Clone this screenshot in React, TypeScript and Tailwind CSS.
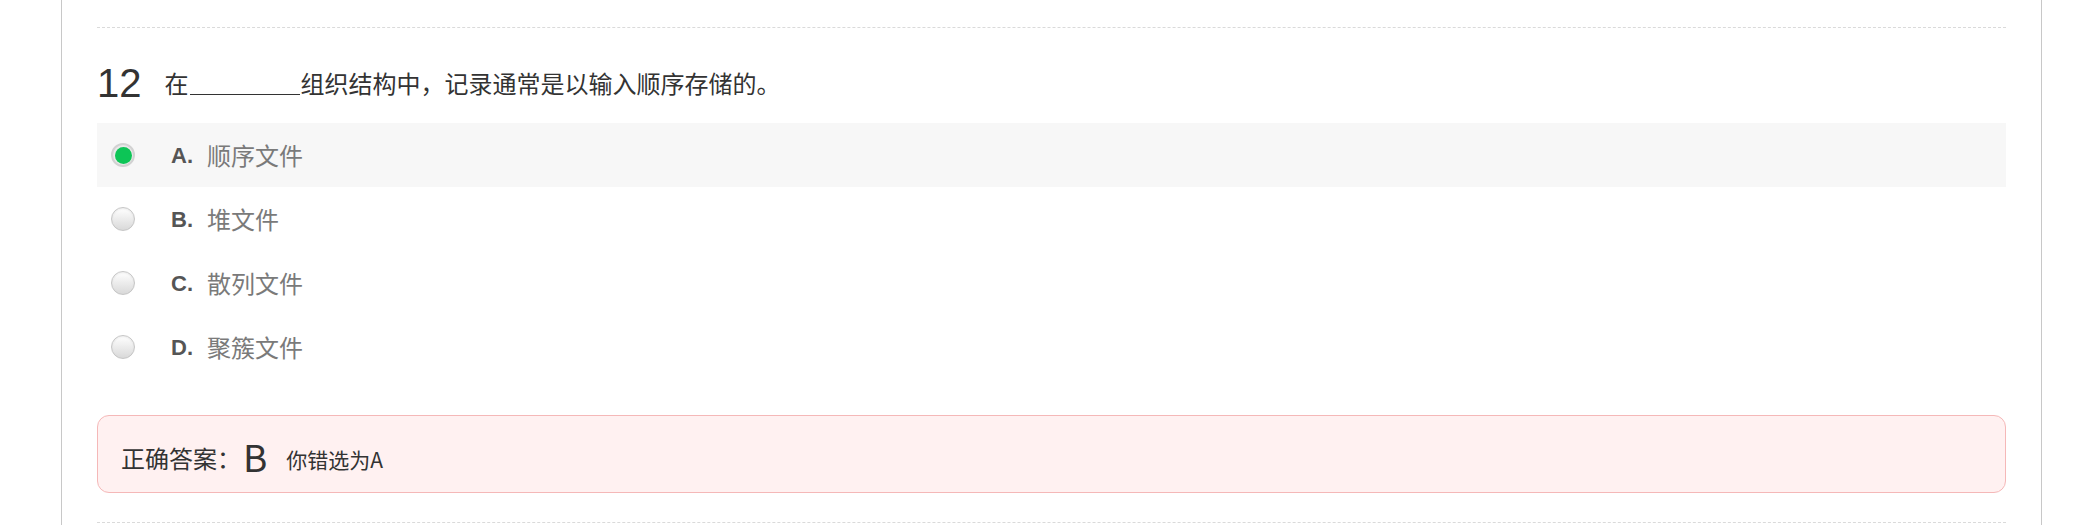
import React from "react";

const options = [
  { key: "A", text: "顺序文件", checked: true },
  { key: "B", text: "堆文件", checked: false },
  { key: "C", text: "散列文件", checked: false },
  { key: "D", text: "聚簇文件", checked: false },
];

const cjk = { fontFamily: '"Noto Sans CJK SC", "Noto Sans", sans-serif' };
const latin = { fontFamily: '"Liberation Sans", Arial, sans-serif' };

function Radio({ checked }: { checked: boolean }) {
  if (checked) {
    return (
      <span className="flex h-[24px] w-[24px] items-center justify-center rounded-full border-2 border-[#d2d2d2] bg-[#e9e9e9]">
        <span className="h-[17px] w-[17px] rounded-full bg-[#0dc556]" />
      </span>
    );
  }
  return (
    <span className="h-[24px] w-[24px] rounded-full border border-[#c6c6c6] bg-gradient-to-b from-[#ffffff] to-[#d9d9d9] shadow-[inset_0_1px_2px_rgba(0,0,0,0.08)]" />
  );
}

export default function App() {
  return (
    <div className="min-h-[525px] w-full bg-white">
      <div className="ml-[61px] min-h-[525px] w-[1981px] border-l border-r border-[#c8c8c8] px-[35px] pt-[27px]">
        {/* question */}
        <div className="border-t border-dashed border-[#dadada]">
          <div className="mt-[35px] mb-[20px] flex h-[40px] items-center">
            <span className="text-[40px] leading-none text-[#333]" style={latin}>
              12
            </span>
            <span className="ml-[23px] flex items-end text-[24px] leading-none text-[#333]" style={cjk}>
              在
              <span className="mx-px inline-block h-[22px] w-[110px] border-b-[1.5px] border-[#333]" />
              组织结构中，记录通常是以输入顺序存储的。
            </span>
          </div>

          {/* options */}
          <div className="flex flex-col">
            {options.map((o) => (
              <div
                key={o.key}
                className={`flex h-[64px] items-center pl-[14px] ${o.checked ? "bg-[#f7f7f7]" : ""}`}
              >
                <Radio checked={o.checked} />
                <span className="ml-[36px] text-[22px] font-bold text-[#555]" style={latin}>
                  {o.key}.
                </span>
                <span className="ml-[14px] text-[24px] text-[#7a7a7a]" style={cjk}>
                  {o.text}
                </span>
              </div>
            ))}
          </div>

          {/* answer */}
          <div className="mt-[36px] flex h-[78px] items-center rounded-[12px] border border-[#f5b8b8] bg-[#fff1f1] px-[23px] pt-[8px]">
            <span className="text-[24px] text-[#333]" style={cjk}>
              正确答案：
            </span>
            <span className="ml-[2px] mb-[4px] text-[37px] leading-none text-[#333]" style={cjk}>
              B
            </span>
            <span className="ml-[19px] mt-[4px] text-[21px] text-[#333]" style={cjk}>
              你错选为A
            </span>
          </div>

          <div className="mt-[29px] border-t border-dashed border-[#dadada]" />
        </div>
      </div>
    </div>
  );
}
